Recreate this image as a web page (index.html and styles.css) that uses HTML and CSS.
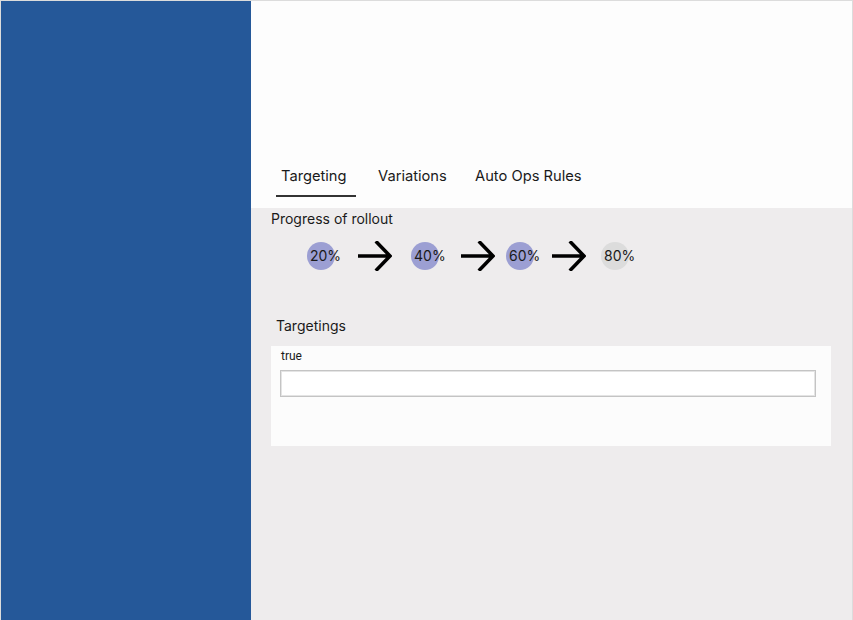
FILE: index.html
```html
<!DOCTYPE html>
<html lang="en">
<head>
<meta charset="utf-8">
<title>Rollout</title>
<link rel="stylesheet" href="styles.css">
</head>
<body>
<div class="app">
  <aside class="sidebar"></aside>
  <main class="main">
    <header class="header">
      <nav class="tabs">
        <div class="tab active">Targeting</div>
        <div class="tab">Variations</div>
        <div class="tab">Auto Ops Rules</div>
      </nav>
    </header>
    <section class="content">
      <div class="section-title">Progress of rollout</div>
      <div class="stages">
        <div class="stage done">20%</div>
        <svg class="arrow" width="34" height="30" viewBox="0 0 34 30"><path d="M1 15H31M19 1.5L32 15L19 28.5" fill="none" stroke="#000" stroke-width="3.5" stroke-linecap="square"/></svg>
        <div class="stage done">40%</div>
        <svg class="arrow" width="34" height="30" viewBox="0 0 34 30"><path d="M1 15H31M19 1.5L32 15L19 28.5" fill="none" stroke="#000" stroke-width="3.5" stroke-linecap="square"/></svg>
        <div class="stage done">60%</div>
        <svg class="arrow" width="34" height="30" viewBox="0 0 34 30"><path d="M1 15H31M19 1.5L32 15L19 28.5" fill="none" stroke="#000" stroke-width="3.5" stroke-linecap="square"/></svg>
        <div class="stage">80%</div>
      </div>
      <div class="targetings-title">Targetings</div>
      <div class="card">
        <div class="card-label">true</div>
        <div class="card-input"></div>
      </div>
    </section>
  </main>
</div>
</body>
</html>
```
FILE: styles.css
```css
html, body {
  margin: 0;
  padding: 0;
}
body {
  font-family: Inter, "Noto Sans", sans-serif;
  color: #1a1a1a;
}
.app {
  display: flex;
  width: 853px;
  height: 621px;
  box-sizing: border-box;
  border: 1px solid #dcdcdc;
  border-bottom: none;
}
.sidebar {
  width: 250px;
  flex: none;
  background: #255899;
}
.main {
  flex: 1;
  display: flex;
  flex-direction: column;
  background: #eeeced;
}
.header {
  height: 207px;
  background: #fdfdfd;
  display: flex;
  align-items: flex-end;
  box-sizing: border-box;
  padding: 0 0 11px 25px;
}
.tabs {
  display: flex;
  gap: 17px;
}
.tab {
  min-width: 80px;
  box-sizing: border-box;
  padding: 0 5px 9px;
  font-size: 14.7px;
  line-height: 20px;
  border-bottom: 2px solid transparent;
}
.tab.active {
  border-bottom-color: #333;
}
.content {
  flex: 1;
  padding: 1px 0 0 20px;
}
.section-title {
  font-size: 14px;
  line-height: 20px;
}
.stages {
  display: flex;
  align-items: center;
  margin: 13px 0 0 36px;
  height: 28px;
}
.stage {
  width: 28px;
  height: 28px;
  border-radius: 50%;
  background: #dcdcdc;
  font-size: 14px;
  line-height: 28px;
  padding-left: 3px;
  box-sizing: border-box;
  white-space: nowrap;
}
.stage.done {
  background: #9c9fd3;
}
.arrow {
  flex: none;
  display: block;
}
.stages > :nth-child(2) { margin-left: 23px; }
.stages > :nth-child(3) { margin-left: 19px; }
.stages > :nth-child(4) { margin-left: 22px; }
.stages > :nth-child(5) { margin-left: 11px; }
.stages > :nth-child(6) { margin-left: 18px; }
.stages > :nth-child(7) { margin-left: 15px; }
.targetings-title {
  font-size: 14px;
  line-height: 20px;
  margin: 46px 0 0 5px;
}
.card {
  width: 560px;
  height: 100px;
  box-sizing: border-box;
  background: #fcfcfc;
  margin-top: 10px;
  padding: 2px 15px 0 9px;
}
.card-label {
  font-family: Roboto, "Noto Sans", sans-serif;
  font-size: 12px;
  line-height: 16px;
  padding-left: 1px;
}
.card-input {
  margin-top: 6px;
  height: 27px;
  box-sizing: border-box;
  background: #fff;
  border: 1px solid #c4c4c4;
  box-shadow: inset 0 0 0 1px #e4e4e4;
}
```
